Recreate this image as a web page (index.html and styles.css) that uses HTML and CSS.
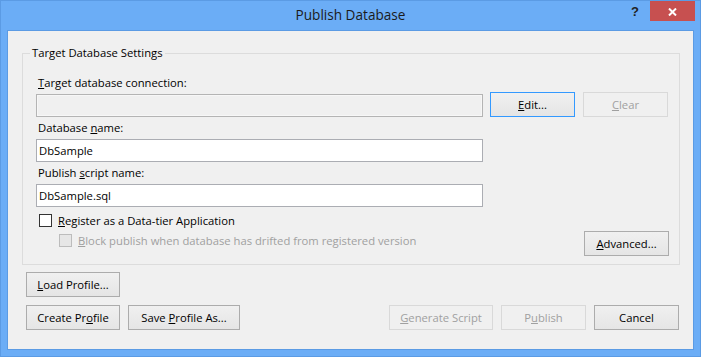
FILE: index.html
```html
<!DOCTYPE html>
<html>
<head>
<meta charset="utf-8">
<title>Publish Database</title>
<link rel="stylesheet" href="styles.css">
</head>
<body>
<div class="window">
  <div class="titlebar">
    <div class="title">Publish Database</div>
    <div class="caption-buttons">
      <span class="help">?</span>
      <span class="close"><svg width="9" height="8" viewBox="0 0 9 8"><path d="M1 0.5 L8 7.5 M8 0.5 L1 7.5" stroke="#fff" stroke-width="2" fill="none"/></svg></span>
    </div>
  </div>
  <div class="client">
    <fieldset class="group">
      <legend>Target Database Settings</legend>
      <div class="group-body">
        <div class="label l1"><u>T</u>arget database connection:</div>
        <div class="conn-row">
          <div class="field field-disabled"></div>
          <button class="btn btn-focused"><u>E</u>dit...</button>
          <button class="btn btn-disabled"><u>C</u>lear</button>
        </div>
        <div class="label l2">Database <u>n</u>ame:</div>
        <div class="field f2">DbSample</div>
        <div class="label l2">Publish <u>s</u>cript name:</div>
        <div class="field f2">DbSample.sql</div>
        <div class="check c1"><span class="box"></span><span><u>R</u>egister as a Data-tier Application</span></div>
        <div class="adv-row">
          <div class="check c2 check-disabled"><span class="box"></span><span><u>B</u>lock publish when database has drifted from registered version</span></div>
          <button class="btn btn-adv"><u>A</u>dvanced...</button>
        </div>
      </div>
    </fieldset>
    <div class="footer">
      <div class="footer-row">
        <button class="btn btn-profile"><u>L</u>oad Profile...</button>
      </div>
      <div class="footer-row second">
        <button class="btn btn-profile">Create Pr<u>o</u>file</button>
        <button class="btn btn-save">Save <u>P</u>rofile As...</button>
        <span class="spacer"></span>
        <button class="btn btn-disabled btn-gen"><u>G</u>enerate Script</button>
        <button class="btn btn-disabled">P<u>u</u>blish</button>
        <button class="btn">Cancel</button>
      </div>
    </div>
  </div>
</div>
</body>
</html>
```
FILE: styles.css
```css
* { box-sizing: border-box; }
html, body { margin: 0; padding: 0; }
body {
  width: 701px;
  height: 357px;
  overflow: hidden;
  font-family: "Open Sans", "Noto Sans", sans-serif;
  font-size: 11.25px;
  color: #000;
  background: #ffffff;
}
u { text-decoration-skip-ink: none; text-underline-offset: 1px; }

.window {
  width: 701px;
  height: 357px;
  background: #6badf6;
  border: 1px solid #5b9be4;
  display: flex;
  flex-direction: column;
}

.titlebar {
  height: 29px;
  flex: none;
  display: grid;
  grid-template-columns: 1fr auto 1fr;
}
.title {
  grid-column: 2;
  font-size: 13.6px;
  line-height: 28px;
  color: #1b1b1b;
}
.caption-buttons {
  grid-column: 3;
  display: flex;
  justify-content: flex-end;
  align-items: flex-start;
  padding-right: 5px;
}
.help {
  font-family: "Liberation Sans", sans-serif;
  font-weight: bold;
  font-size: 13px;
  line-height: 22px;
  color: #222;
  margin-right: 11px;
}
.close {
  width: 45px;
  height: 20px;
  background: #c75050;
  display: flex;
  align-items: center;
  justify-content: center;
}
.close svg { display: block; margin-top: 1px; }

.client {
  flex: 1;
  margin: 0 6px 6px;
  border: 1px solid #5b9be4;
  background: #f0f0f0;
  display: flex;
  flex-direction: column;
}

.group {
  margin: 15px 13px 0 14px;
  padding: 0;
  border: 1px solid #dcdcdc;
  min-inline-size: 0;
}
.group legend {
  margin-left: 7px;
  padding: 0 2px;
  line-height: 14px;
}
.group-body {
  padding: 0 10px 8px 13px;
  display: flex;
  flex-direction: column;
}

.label {
  line-height: 15px;
  padding-left: 2px;
}
.l1 { margin-top: 15px; }
.l2 { margin-top: 3px; }

.conn-row {
  margin-top: 2px;
  display: flex;
  align-items: flex-end;
  height: 25px;
}
.conn-row .btn { margin-left: 8px; }
.conn-row .btn-focused { margin-left: 7px; }

.field {
  width: 447px;
  height: 23px;
  border: 1px solid #abadb3;
  background: #fff;
  padding-left: 2px;
  line-height: 21px;
  flex: none;
}
.f2 { margin-top: 4px; }
.field-disabled {
  background: #f0f0f0;
  border-color: #b4b4b4;
  box-shadow: inset 0 0 0 1px #f7f7f7;
}

.btn {
  font: inherit;
  color: #000;
  width: 85px;
  height: 25px;
  padding: 0;
  line-height: 23px;
  text-align: center;
  border: 1px solid #acacac;
  background: linear-gradient(#f0f0f0, #e5e5e5);
  border-radius: 0;
  flex: none;
}
.btn-focused { border-color: #3399ff; }
.btn-disabled {
  color: #a0a0a0;
  border-color: #d9d9d9;
  background: #f0f0f0;
}

.check {
  display: flex;
  align-items: center;
  line-height: 15px;
}
.check .box {
  width: 13px;
  height: 13px;
  border: 1px solid #333;
  background: #fff;
  margin-right: 6px;
  flex: none;
}
.c1 { margin-top: 6px; margin-left: 3px; }
.c2 { margin-top: 2px; margin-left: 23px; }
.check-disabled { color: #a0a0a0; }
.check-disabled .box {
  border-color: #bcbcbc;
  background: #e6e6e6;
}

.adv-row {
  margin-top: 3px;
  display: flex;
  justify-content: space-between;
  align-items: flex-start;
}

.footer {
  padding: 7px 14px 0 18px;
  display: flex;
  flex-direction: column;
  gap: 8px;
}
.footer-row {
  display: flex;
  gap: 8px;
}
.spacer { flex: 1; }
.btn-profile { width: 94px; }
.btn-save { width: 112px; }
.btn-gen { width: 104px; }
```
